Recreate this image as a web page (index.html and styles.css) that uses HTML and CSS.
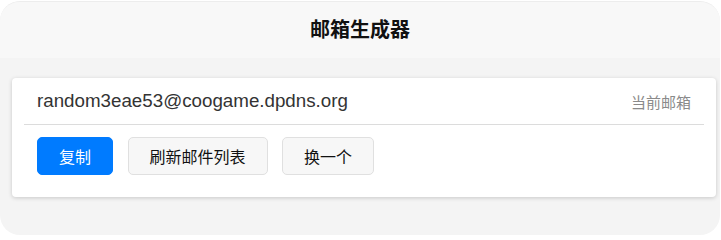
FILE: index.html
```html
<!DOCTYPE html>
<html lang="zh-CN">
<head>
<meta charset="utf-8">
<title>邮箱生成器</title>
<link rel="stylesheet" href="styles.css">
</head>
<body>
<div class="app">
  <header class="app-header">
    <h1 class="app-title">邮箱生成器</h1>
  </header>
  <main class="app-body">
    <section class="card">
      <div class="email-row">
        <span class="email-address">random3eae53@coogame.dpdns.org</span>
        <span class="email-label">当前邮箱</span>
      </div>
      <div class="actions">
        <button class="btn btn-primary">复制</button>
        <button class="btn">刷新邮件列表</button>
        <button class="btn">换一个</button>
      </div>
    </section>
  </main>
</div>
</body>
</html>
```
FILE: styles.css
```css
* { box-sizing: border-box; }
html, body { margin: 0; padding: 0; background: #ffffff; }
body {
  font-family: "Liberation Sans", Arial, "Noto Sans CJK SC", sans-serif;
  width: 721px;
  height: 236px;
  overflow: hidden;
}
.app {
  margin: 1px 1px 1px 0;
  height: 234px;
  background: #f4f4f4;
  border-radius: 20px;
  border-top: 1px solid #ededed;
  overflow: hidden;
}
.app-header {
  height: 56px;
  background: #f8f8f8;
  display: flex;
  align-items: center;
  justify-content: center;
}
.app-title {
  margin: 0;
  font-family: "Noto Sans CJK SC", sans-serif;
  font-size: 20px;
  line-height: 26px;
  font-weight: 700;
  color: #111;
  padding-bottom: 2px;
}
.app-body {
  padding: 20px 4px 0 12px;
}
.card {
  background: #ffffff;
  border-radius: 4px;
  box-shadow: 0 1px 4px rgba(0, 0, 0, 0.18);
  padding: 0 12px;
  height: 119px;
}
.email-row {
  display: flex;
  justify-content: space-between;
  align-items: center;
  height: 47px;
  padding: 0 13px;
  border-bottom: 1px solid #dcdcdc;
}
.email-address {
  font-size: 18.75px;
  color: #333;
}
.email-label {
  font-family: "Noto Sans CJK SC", sans-serif;
  font-size: 15px;
  color: #8a8a8a;
}
.actions {
  display: flex;
  gap: 14.5px;
  padding: 12px 13px 0;
}
.btn {
  font-family: "Noto Sans CJK SC", sans-serif;
  font-size: 16px;
  line-height: 22px;
  padding: 7px 21px;
  border: 1px solid #e0e0e0;
  border-radius: 5px;
  background: #f7f7f7;
  color: #111;
}
.btn-primary {
  background: #007bff;
  border-color: #007bff;
  color: #ffffff;
}
```
